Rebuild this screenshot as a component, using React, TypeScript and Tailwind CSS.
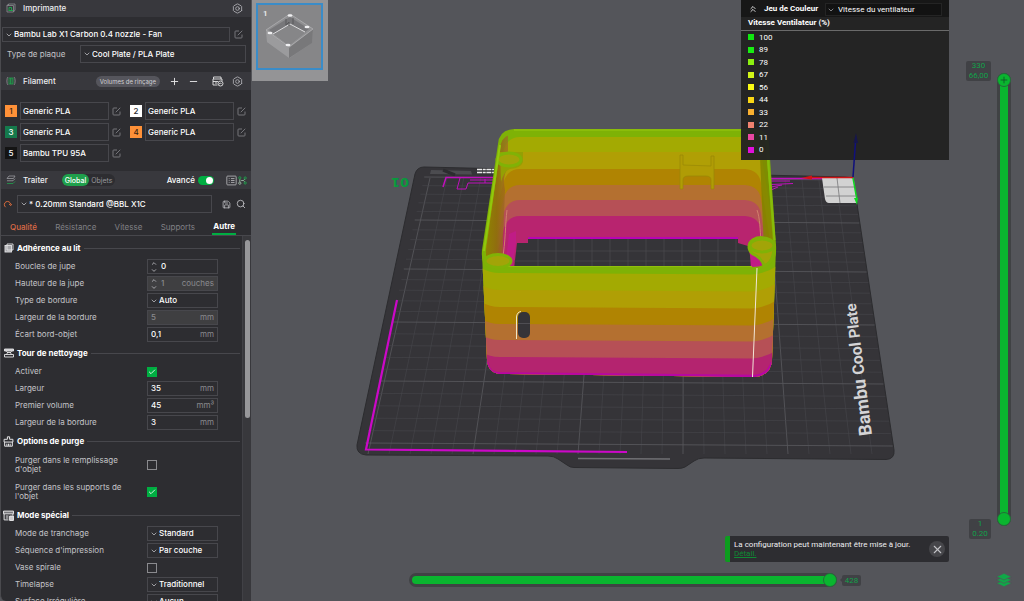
import { useState } from "react"
import type { ReactNode } from "react"
import { Bolt, Check, ChevronDown, ChevronsUp, ChevronUp, Minus, Plus, Save, Search, X } from "lucide-react"

const filaments = [
  { id: 1, name: "Generic PLA", badge: "bg-[#ff9138] text-[#3a2410]" },
  { id: 2, name: "Generic PLA", badge: "bg-white text-[#2d2d31]" },
  { id: 3, name: "Generic PLA", badge: "bg-[#157a4c] text-white" },
  { id: 4, name: "Generic PLA", badge: "bg-[#ff9138] text-[#3a2410]" },
  { id: 5, name: "Bambu TPU 95A", badge: "bg-[#141414] text-white" },
]

const tabs = ["Qualité", "Résistance", "Vitesse", "Supports", "Autre"]

const legend = [
  { value: 100, color: "bg-[#10e810]" },
  { value: 89, color: "bg-[#18ee12]" },
  { value: 78, color: "bg-[#8cf010]" },
  { value: 67, color: "bg-[#d2f418]" },
  { value: 56, color: "bg-[#fafa14]" },
  { value: 44, color: "bg-[#fad614]" },
  { value: 33, color: "bg-[#fab030]" },
  { value: 22, color: "bg-[#f08270]" },
  { value: 11, color: "bg-[#ea48a2]" },
  { value: 0, color: "bg-[#e010dc]" },
]

/* ---------- icons ---------- */

function EditIcon() {
  return (
    <svg viewBox="0 0 18 18" className="size-[9px] shrink-0" fill="none" stroke="#8e8e93" strokeWidth="1.5">
      <path d="M10 2H3.5A1.5 1.5 0 0 0 2 3.5v11A1.5 1.5 0 0 0 3.5 16h11a1.5 1.5 0 0 0 1.5-1.5V9" />
      <path d="M7.5 10.5 16.5 1.5" />
    </svg>
  )
}

function PrinterIcon() {
  return (
    <svg viewBox="0 0 20 20" className="size-[10px]" fill="none" stroke="#8d8d92" strokeWidth="1.6">
      <path d="M5 2h13v12l-3 4H2V5z M5 2v3 M15 5v13 M2 5h13" />
      <path d="M5 15h9M6 15V9h5v5" stroke="#1fa04c" strokeWidth="2" />
    </svg>
  )
}

function FilamentIcon() {
  return (
    <svg viewBox="0 0 20 20" className="size-[10px]" fill="none" strokeWidth="1.7">
      <path d="M4 2C1 4 1 16 4 18M16 2c3 2 3 14 0 16" stroke="#8d8d92" />
      <path d="M6 4h8v12H6zM9 4v12M12 4v12" stroke="#1fa04c" />
    </svg>
  )
}

function ProcessIcon() {
  return (
    <svg viewBox="0 0 20 20" className="size-[10px]" fill="none" strokeWidth="1.6">
      <path d="M6 2h12l-3 5H2z" stroke="#9a9a9f" />
      <path d="M2 11.5h12l4-4" stroke="#9a9a9f" />
      <path d="M2 17h12l4-4" stroke="#1fa04c" />
    </svg>
  )
}

function AmsIcon() {
  return (
    <svg viewBox="0 0 24 22" className="h-[11px] w-[12px]" fill="none" stroke="#e6e6e8" strokeWidth="1.8">
      <path d="M3 6V2h15v4M2 6h18v4M2 6v12h9M2 11h10M6 14h4" />
      <circle cx="17" cy="15" r="5" />
      <path d="m14 16 3-2 2 2" />
    </svg>
  )
}

function ListIcon() {
  return (
    <svg viewBox="0 0 20 20" className="size-[11px]" fill="none" stroke="#b8b8bc" strokeWidth="1.5">
      <rect x="1.5" y="2" width="17" height="16" rx="1.5" />
      <path d="M5 6.5h1.5M9 6.5h6.5M5 10h1.5M9 10h6.5M5 13.5h1.5M9 13.5h6.5" />
    </svg>
  )
}

function CompareIcon() {
  return (
    <svg viewBox="0 0 20 20" className="size-[9px]" fill="none" stroke="#9fb8a6" strokeWidth="2">
      <path d="M4 7v6M7 10h5M12 10l3-3M12 10l3 3" />
      <circle cx="4" cy="4" r="2.5" stroke="#1fa04c" />
      <circle cx="16" cy="4.5" r="2.5" stroke="#1fa04c" />
      <circle cx="4" cy="16" r="2.5" />
      <circle cx="16" cy="15.5" r="2.5" stroke="#1fa04c" />
    </svg>
  )
}

function ResetIcon() {
  return (
    <svg viewBox="0 0 20 20" className="size-[9px] shrink-0" fill="none" stroke="#e8703c" strokeWidth="2">
      <path d="M6 16A7 7 0 1 1 17 10" />
      <path d="m13.5 9 3.5 3.5L20 9" />
    </svg>
  )
}

function BedIcon() {
  return (
    <svg viewBox="0 0 20 20" className="size-[10px]" fill="none" stroke="#e6e6e8" strokeWidth="1.8">
      <path d="M6 5V2h12v12h-3" />
      <rect x="2" y="5" width="13" height="13" fill="#a9a9ad" />
      <path d="M6 5v9h9" />
    </svg>
  )
}

function TowerIcon() {
  return (
    <svg viewBox="0 0 20 20" className="size-[10px]" fill="none" stroke="#e6e6e8" strokeWidth="1.8">
      <path d="M1 2h18v4H1z" fill="#c9c9cc" />
      <path d="M4 6c4 2 4 5 0 7M16 6c-4 2-4 5 0 7M6 9h8" />
      <path d="M1 13h18v5H1z" />
    </svg>
  )
}

function PurgeIcon() {
  return (
    <svg viewBox="0 0 20 20" className="size-[11px]" fill="none" stroke="#e6e6e8" strokeWidth="1.8">
      <path d="M8 6V1.5h4V6h6v5H2V6zM3 11v7.5h14V11M7 18v-4M10 18v-4M13 18v-4" />
    </svg>
  )
}

function SpecialIcon() {
  return (
    <svg viewBox="0 0 20 20" className="size-[11px]" fill="none" stroke="#e6e6e8" strokeWidth="1.8">
      <path d="M1 2h18v5H1z" fill="#77777b" />
      <path d="M2 7v11h8M5 11h5M5 14.5h5M18 7v3" />
      <path d="M12 11h7v8h-7z" fill="#c9c9cc" />
    </svg>
  )
}

/* ---------- form parts ---------- */

function PanelHeader({ icon, title, children }: { icon: ReactNode; title: string; children?: ReactNode }) {
  return (
    <div className="flex h-[18px] shrink-0 items-center bg-[#38383d] pl-[5px] pr-2">
      {icon}
      <h2 className="ml-[7px] font-medium text-[#ededf0]">{title}</h2>
      {children}
    </div>
  )
}

function Dropdown({ value, label, className = "" }: { value: string; label?: string; className?: string }) {
  return (
    <span className={"relative flex items-center border border-[#47474c] " + className}>
      <ChevronDown className="pointer-events-none absolute left-[2px] size-2 text-[#b4b4b8]" strokeWidth={2.5} />
      <select aria-label={label} className="h-full w-full appearance-none bg-transparent pl-[11px] font-medium text-white outline-none">
        <option>{value}</option>
      </select>
    </span>
  )
}

function Section({ icon, title, children }: { icon: ReactNode; title: string; children: ReactNode }) {
  return (
    <section>
      <div className="flex h-5 items-center gap-[3px] pl-[2px]">
        <span className="flex w-[11px] justify-center">{icon}</span>
        <h3 className="font-bold text-white">{title}</h3>
        <span className="h-px flex-1 bg-[#47474c]" />
      </div>
      {children}
    </section>
  )
}

function Row({ label, tall, children }: { label: string; tall?: boolean; children: ReactNode }) {
  return (
    <label className={"flex items-center pl-[14px] " + (tall ? "h-[27px]" : "h-[17px]")}>
      <span className="w-[132px] pr-4 text-[#c4c4c8]">{label}</span>
      {children}
    </label>
  )
}

function Field({ value, unit, spin, disabled }: { value: string; unit?: string; spin?: boolean; disabled?: boolean }) {
  return (
    <span className={"flex h-[15px] w-[71px] items-center border border-[#47474c] px-[3px] " + (disabled ? "bg-[#3f3f41]" : "")}>
      {spin && (
        <span className="-ml-px mr-[3px] flex flex-col text-[#b4b4b8]">
          <ChevronUp className="h-[7px] w-2" strokeWidth={3} />
          <ChevronDown className="h-[7px] w-2" strokeWidth={3} />
        </span>
      )}
      <input
        defaultValue={value}
        disabled={disabled}
        className="w-0 flex-1 bg-transparent font-medium text-white outline-none disabled:text-[#8a8a8e]"
      />
      {unit && <span className="text-[#8a8a8e]">{unit}</span>}
    </span>
  )
}

function Tick({ on }: { on?: boolean }) {
  return (
    <span className="relative flex size-[10px]">
      <input
        type="checkbox"
        defaultChecked={on}
        className="peer size-[10px] appearance-none border border-[#8a8a8e] checked:border-[#00ae42] checked:bg-[#00ae42]"
      />
      <Check className="pointer-events-none absolute inset-px hidden size-2 text-white peer-checked:block" strokeWidth={2.5} />
    </span>
  )
}

function Choice({ value }: { value: string }) {
  return <Dropdown value={value} className="h-[15px] w-[71px]" />
}

/* ---------- 3D scene ---------- */

const majorRows = [177, 220, 269, 322, 381, 443]

function gridRows() {
  const rows: { y: number; major: boolean }[] = []
  for (let i = 0; i < majorRows.length - 1; i++) {
    const step = (majorRows[i + 1] - majorRows[i]) / 5
    for (let k = 0; k < 5; k++) rows.push({ y: majorRows[i] + step * k, major: k === 0 })
  }
  rows.push({ y: 443, major: true })
  return rows
}

const leftAt = (y: number) => 430 - (y - 178) * 0.222
const rightAt = (y: number) => 853 + (y - 178) * 0.15

const innerBands = [
  { y: 137, color: "#a3aa02" },
  { y: 152, color: "#b09f05" },
  { y: 169, color: "#b08402" },
  { y: 185, color: "#b47030" },
  { y: 200, color: "#b65056" },
  { y: 216, color: "#b8246f" },
]

const outerBands = [
  { y: 273, color: "#a3aa02" },
  { y: 290, color: "#b09f05" },
  { y: 307, color: "#b08402" },
  { y: 324, color: "#b47030" },
  { y: 340, color: "#b65056" },
  { y: 357, color: "#b4246f" },
]

function Scene() {
  return (
    <svg viewBox="251 0 773 601" className="h-full w-full" role="img" aria-label="Aperçu">
      <defs>
        <clipPath id="inner">
          <path d="M500 150Q500 135 514 134H757Q765 134 766 146L773 242Q774 268 752 269H500Q485 268 486 250Z" />
        </clipPath>
        <clipPath id="outer">
          <path d="M482 254Q484 267 500 267H752Q774 267 776 248L772 360Q771 376 754 377L500 374Q488 373 487 360Z" />
        </clipPath>
        <linearGradient id="leftWall" x1="0" x2="1">
          <stop offset="0" stopColor="#8c8c00" />
          <stop offset="0.6" stopColor="#8f6e0c" stopOpacity="0.95" />
          <stop offset="1" stopColor="#a0602a" stopOpacity="0.6" />
        </linearGradient>
      </defs>

      {/* build plate */}
      <path
        d="M415 174Q417 167 424 167L845 177Q853 177 854 184L894 450Q895 459 886 459.5L704 458Q698 458 694 461L685 467Q682 468.5 678 468.5L574 467.5Q570 467.5 567 465L558 459Q554 456 548 456L366 455Q356 454 357 445Z"
        fill="#353438"
        stroke="#2c2c2f"
      />
      <path d="M578 458.5 670 459" stroke="#707074" strokeWidth="1.5" />
      <path d="M431 170 471 171 472 174.5 430 174Z" fill="#4c4c50" />
      <path d="M443 170 455 175" stroke="#2c2c2f" strokeWidth="3" />
      <path d="M477 169.5h17M477 172.5h17" stroke="#e8e8e8" strokeWidth="1.5" strokeDasharray="5 .7 3 .7" />
      <g fill="none">
        {Array.from({ length: 25 }, (_, i) => (
          <path
            key={i}
            d={`M${430 + i * 16.9} 178L${368 + i * 21} 454`}
            stroke={i % 5 === 0 ? "#56565a" : "#47474b"}
            strokeWidth={i % 5 === 0 ? 0.9 : 0.6}
          />
        ))}
        {gridRows().map(({ y, major }) => (
          <path
            key={y}
            d={`M${leftAt(y) - 6} ${y}L${rightAt(y)} ${y + 3}`}
            stroke={major ? "#56565a" : "#47474b"}
            strokeWidth={major ? 0.9 : 0.6}
          />
        ))}
      </g>
      <text x="409" y="178" transform="rotate(180 409 178)" fill="#079a3c" className="font-['DejaVu_Sans'] text-[13px] font-bold">
        01
      </text>
      <text transform="translate(872 435) rotate(-97)" fill="#d4d4d6" className="font-['Roboto',sans-serif] font-bold">
        <tspan className="text-[18px]">Bambu </tspan>
        <tspan className="text-[16px]">Cool </tspan>
        <tspan className="text-[15px]">Plate</tspan>
      </text>

      {/* prime line and purge moves */}
      <path d="M397 300 366 449.5 627 452" fill="none" stroke="#cc08c8" strokeWidth="2.2" />
      <g fill="none" stroke="#c010bc">
        <path d="M443 187 446 177.5H497" strokeWidth="1.5" />
        <path d="M460 178 457 189H466L468 183H494M470 180H494M485 179v4" />
        <path d="M768 178.5H824" strokeWidth="1.5" />
        <path d="M771 181H790M771 184.5 793 183.5M771 187 782 185M771 190 778 187" />
      </g>

      {/* axis corner */}
      <path d="M822 178H851Q854 178 854 181L857 203H829Q826 203 825 199Z" fill="#d2d2d2" />
      <path d="M837 178 840 203M824 187 855 187M826 196 857 196" stroke="#77777a" strokeWidth="0.8" />
      <path d="M812 177.5H853" stroke="#d01414" strokeWidth="1.5" />
      <path d="M801 178 812 175.5V179.5Z" fill="#d01414" />
      <path d="M853 178 857 200" stroke="#10d820" strokeWidth="1.5" />
      <path d="M854 198 858 198 857 205Z" fill="#10d820" />

      {/* printed box, inside */}
      <path
        d="M498 144Q499 130 514 129H753Q768 129 769 144L776 245Q778 272 752 273H500Q480 272 482 250Z"
        fill="#7eb206"
      />
      <g clipPath="url(#inner)">
        {innerBands.map((b) => (
          <path
            key={b.y}
            d={`M476 ${b.y + 110}L503 ${b.y + 16}Q506 ${b.y} 520 ${b.y}H745Q759 ${b.y + 1} 761 ${b.y + 14}L776 ${b.y + 110}V290H476Z`}
            fill={b.color}
          />
        ))}
        <path d="M496 134H508V168Q502 176 505 190L502 270H480V250Z" fill="url(#leftWall)" />
        <path d="M759 134H770L775 250H764Z" fill="#7e8200" opacity="0.8" />
        <path d="M507 210C505 225 506 240 502 262M757 210C760 218 760 230 761 240" fill="none" stroke="#d0806c" />
        <path d="M514 269 517 243H528V237.5H738V243L748 246 753 269Z" fill="#353438" />
        <path d="M528 238H738" fill="none" stroke="#b804b4" strokeWidth="2" />
        <path
          d="M538 239v28M556 239v28M574 239v28M592 239v28M610 239v28M628 239v28M646 239v28M664 239v28M682 239v28M700 239v28M718 239v28M736 239v28M516 251h234M514 261h238"
          stroke="#4d4d51"
          strokeWidth="0.6"
        />
        <path d="M509 234 516 231V243L512 269H505Z" fill="#c01c86" />
        <path d="M749 240h12l6 29H751Z" fill="#c01c86" />
      </g>
      <path
        d="M680 155h3v10l28 1v-10h3v33h-3v-9q0-4-5-4h-18q-5 0-5 4v9h-3z"
        fill="#b09c05"
        stroke="#988806"
        strokeWidth="0.7"
      />
      <path d="M514 130H753" stroke="#90c00c" strokeWidth="1.5" />

      {/* printed box, front */}
      <g clipPath="url(#outer)">
        <path d="M478 240H780V380H478Z" fill="#7eb206" />
        {outerBands.map((b) => (
          <path
            key={b.y}
            d={`M478 ${b.y - 8}Q486 ${b.y} 500 ${b.y}L752 ${b.y + 1.5}Q769 ${b.y} 779 ${b.y - 9}V380H478Z`}
            fill={b.color}
          />
        ))}
        <path d="M487 362Q488 373 500 373.5L752 376Q768 376 772 362" fill="none" stroke="#b806a4" strokeWidth="2.5" />
      </g>
      <path d="M500 266.5H752" stroke="#90c00c" />
      <path d="M757 268 752.5 377" stroke="#f2e6d8" />
      <path d="M516.5 339V317Q517 312 521 311.5" fill="none" stroke="#efe6c8" />
      <rect x="518" y="312" width="12" height="26" rx="5" fill="#353438" />
      <path d="M518 323.5h12" stroke="#5a5a5e" strokeWidth="0.7" />

      {/* corner posts */}
      <path d="M500 152H523V162Q521 168 510 169Q504 171 501 182Z" fill="#94a004" />
      <g stroke="#80b206" strokeWidth="3" fill="#a2a408">
        <ellipse cx="509" cy="159.5" rx="12" ry="6.5" />
        <ellipse cx="498" cy="261" rx="13" ry="6.5" />
        <path d="M749 247C749 234 775 235 774 247Q774 262 764 266Q762 258 753 254Q749 251 749 247Z" />
        <ellipse cx="762" cy="245.5" rx="12" ry="6.5" />
      </g>
      <path d="M500 145 484 251" stroke="#92c80c" strokeWidth="2" />
      <path d="M768 160 774.5 240" stroke="#88bc0a" strokeWidth="2" />
    </svg>
  )
}

/* the Z axis is drawn over the legend panel */
function ZAxis() {
  return (
    <svg viewBox="251 0 773 601" className="pointer-events-none absolute inset-0 h-full w-full" aria-hidden="true">
      <path d="M853 177 855.5 142" stroke="#10107c" strokeWidth="1.5" />
      <path d="M853.5 143 856 133 858 143Z" fill="#16164c" />
    </svg>
  )
}

function Thumbnail() {
  return (
    <button aria-label="Plateau 1" className="absolute left-px top-0 h-[81px] w-[76px] bg-[#949496] px-1 pb-[11px] pt-[3px]">
      <span className="relative block h-full w-[67px] border-2 border-[#3a8cc8] bg-[#868688]">
        <span className="absolute left-[5px] top-[3px] font-semibold leading-3 text-[#ececee]">1</span>
        <svg viewBox="0 0 63 63" className="h-full w-full">
          <path d="M8 25 32 9 55 24 54 38 32 53 9 37Z" fill="#8f8f91" />
          <path d="M8 25 31 43V53L9 37Z" fill="#9b9b9d" />
          <path d="M55 24 31 43V53L54 38Z" fill="#78787a" />
          <path d="M11 25 32 12 51 24 31 40Z" fill="#77777a" />
          <path d="m16 29 16-10 16 8-17 13Z" fill="#868688" />
          <path d="m15 29 17-10 15 8" fill="none" stroke="#dcdcde" />
          <path d="M8 25 32 9 55 24 31 42Z" fill="none" stroke="#b0b0b2" strokeWidth="0.8" />
          <path d="M28 14v6l3-3v4M35 13v6" fill="none" stroke="#58585a" />
          <g fill="#f0f0f2">
            <ellipse cx="32" cy="10.5" rx="2.5" ry="1.2" />
            <ellipse cx="12" cy="28" rx="2.5" ry="1.2" />
            <ellipse cx="49" cy="22" rx="2.5" ry="1.2" />
            <ellipse cx="30" cy="40" rx="2.5" ry="1.2" />
          </g>
        </svg>
      </span>
    </button>
  )
}

function Legend() {
  return (
    <div className="absolute right-[75px] top-0 flex h-40 w-[208px] flex-col bg-[#222222]/95 text-white">
      <div className="flex h-[17px] items-center bg-[#171717] px-[7px]">
        <button aria-label="Réduire">
          <ChevronsUp className="size-[10px]" strokeWidth={2} />
        </button>
        <h2 className="ml-[6px] flex-1 font-bold">Jeu de Couleur</h2>
        <span className="relative mt-[2px] flex h-[13px] w-[117px] items-center border border-[#242424] bg-[#121212]">
          <ChevronDown className="pointer-events-none absolute left-px size-2 text-[#b4b4b8]" />
          <select aria-label="Jeu de Couleur" className="w-full appearance-none pl-3 outline-none">
            <option>Vitesse du ventilateur</option>
          </select>
        </span>
      </div>
      <h3 className="h-[14px] border-b border-[#6a6a6a] pl-[7px] font-bold leading-3">Vitesse Ventilateur (%)</h3>
      <ul className="flex flex-1 flex-col pb-1 pl-[7px]">
        {legend.map((l) => (
          <li key={l.value} className="flex flex-1 items-center gap-[5px]">
            <span className={"size-[6px] " + l.color} />
            {l.value}
          </li>
        ))}
      </ul>
    </div>
  )
}

function LayerSlider() {
  const thumb =
    "pointer-events-none absolute inset-0 h-full w-full appearance-none bg-transparent [direction:rtl] [writing-mode:vertical-lr] [&::-webkit-slider-thumb]:pointer-events-auto [&::-webkit-slider-thumb]:size-[14px] [&::-webkit-slider-thumb]:appearance-none [&::-webkit-slider-thumb]:rounded-full [&::-webkit-slider-thumb]:border [&::-webkit-slider-thumb]:border-[#256b3a] [&::-webkit-slider-thumb]:bg-[#0ab52f]"
  return (
    <div className="absolute bottom-[75px] right-[13px] top-[73px] w-[14px]">
      <div className="h-full rounded-full bg-[#404244] px-[3px] py-1">
        <div className="h-full bg-[#0ab52f]" />
      </div>
      <input type="range" min={1} max={330} defaultValue={1} aria-label="Couche basse" className={thumb} />
      <input type="range" min={1} max={330} defaultValue={330} aria-label="Couche haute" className={thumb} />
      <Plus className="pointer-events-none absolute left-[2px] top-[2px] size-[10px] text-[#14562a]" strokeWidth={2} />
      <p className="absolute right-5 top-[-12px] w-[25px] rounded-xs bg-[#404145] text-center leading-[10px] text-[#12a04a]">
        330
        <br />
        66,00
      </p>
      <p className="absolute bottom-[-13px] right-5 w-[22px] rounded-xs bg-[#404145] text-center leading-[10px] text-[#12a04a]">
        1
        <br />
        0.20
      </p>
    </div>
  )
}

function MoveSlider() {
  return (
    <div className="absolute bottom-[14px] left-[158px] right-[163px] flex items-center">
      <div className="relative h-[14px] flex-1">
        <div className="h-full rounded-full bg-[#404244] p-[3px]">
          <div className="h-full rounded-full bg-[#0ab52f]" />
        </div>
        <input
          type="range"
          min={0}
          max={428}
          defaultValue={428}
          aria-label="Mouvement"
          className="absolute inset-0 h-full w-full appearance-none bg-transparent [&::-webkit-slider-thumb]:size-[14px] [&::-webkit-slider-thumb]:appearance-none [&::-webkit-slider-thumb]:rounded-full [&::-webkit-slider-thumb]:border [&::-webkit-slider-thumb]:border-[#256b3a] [&::-webkit-slider-thumb]:bg-[#0ab52f]"
        />
      </div>
      <span className="ml-[3px] size-0 border-y-2 border-r-2 border-y-transparent border-r-[#404145]" />
      <span className="w-[19px] rounded-xs bg-[#404145] text-center leading-[11px] text-[#12a04a]">428</span>
    </div>
  )
}

function Notice() {
  const [open, setOpen] = useState(true)
  if (!open) return null
  return (
    <div className="absolute bottom-[39px] right-[75px] flex h-[26px] w-[224px] items-center rounded-xs border-l-[5px] border-[#0c9c1e] bg-[#2d2d31] px-1 text-[#ededf0]">
      <div className="flex-1 leading-[9px]">
        <p>La configuration peut maintenant être mise à jour.</p>
        <a href="#detail" className="text-[#0f8a34] underline">
          Détail.
        </a>
      </div>
      <button aria-label="Fermer" onClick={() => setOpen(false)} className="flex size-4 items-center justify-center rounded-full bg-[#46464a]">
        <X className="size-[13px] text-[#c4c4c8]" strokeWidth={2} />
      </button>
    </div>
  )
}

/* ---------- page ---------- */

export default function App() {
  const [tab, setTab] = useState("Autre")

  return (
    <div className="flex h-screen overflow-hidden bg-[#54555a] font-['Inter',sans-serif] text-[8px] leading-[9px]">
      <aside className="flex w-[251px] shrink-0 flex-col overflow-hidden rounded-bl-md border-l border-[#4a4a4e] bg-[#2d2d31]">
        <div className="-mt-px">
          <PanelHeader icon={<PrinterIcon />} title="Imprimante">
            <button aria-label="Réglages imprimante" className="ml-auto">
              <Bolt className="size-[11px] text-[#b4b4b8]" strokeWidth={1.8} />
            </button>
          </PanelHeader>
        </div>

        <div className="mt-[10px] flex items-center gap-1 pl-px pr-2">
          <Dropdown label="Imprimante" value="Bambu Lab X1 Carbon 0.4 nozzle - Fan" className="h-[15px] flex-1" />
          <button aria-label="Modifier">
            <EditIcon />
          </button>
        </div>
        <label className="mt-[3px] flex items-center pl-[6px] pr-[5px]">
          <span className="w-[73px] text-[#c4c4c8]">Type de plaque</span>
          <Dropdown value="Cool Plate / PLA Plate" className="h-[18px] flex-1" />
        </label>

        {/* Filament */}
        <div className="mt-[9px]">
          <PanelHeader icon={<FilamentIcon />} title="Filament">
            <button className="ml-auto rounded-full bg-[#55555c] px-1 py-px text-[6px] text-[#d0d0d4]">Volumes de rinçage</button>
            <button aria-label="Ajouter" className="ml-[9px]">
              <Plus className="size-[11px] text-[#e6e6e8]" strokeWidth={2} />
            </button>
            <button aria-label="Retirer" className="ml-2">
              <Minus className="size-[11px] text-[#e6e6e8]" strokeWidth={2} />
            </button>
            <button aria-label="Synchroniser AMS" className="ml-[13px]">
              <AmsIcon />
            </button>
            <button aria-label="Réglages filament" className="ml-2">
              <Bolt className="size-[11px] text-[#b4b4b8]" strokeWidth={1.8} />
            </button>
          </PanelHeader>
        </div>
        <div className="mt-3 grid grid-cols-2 gap-y-[3px]">
          {filaments.map((f) => (
            <div key={f.id} className="flex items-center gap-[3px] pl-1 pr-[5px]">
              <button className={"size-3 text-center font-medium leading-3 " + f.badge}>{f.id}</button>
              <span className="flex h-[18px] flex-1 border border-[#47474c] px-[2px]">
                <input aria-label={"Filament " + f.id} defaultValue={f.name} className="w-0 flex-1 bg-transparent font-medium text-white outline-none" />
              </span>
              <button aria-label="Modifier">
                <EditIcon />
              </button>
            </div>
          ))}
        </div>

        {/* Process */}
        <div className="mt-[9px]">
          <PanelHeader icon={<ProcessIcon />} title="Traiter">
            <div className="ml-[14px] flex h-3 items-center rounded-full bg-[#2d2d31] text-[7px] text-[#98989c]">
              <button className="h-3 rounded-full bg-[#1fa04c] px-[3px] font-medium text-white">Global</button>
              <button className="px-[2px]">Objets</button>
            </div>
            <label className="ml-auto flex items-center gap-[3px] font-medium text-white">
              Avancé
              <input
                type="checkbox"
                role="switch"
                defaultChecked
                className="h-[9px] w-4 appearance-none rounded-full bg-[#55555c] p-px before:block before:size-[7px] before:rounded-full before:bg-white checked:bg-[#00ae42] checked:before:ml-[7px]"
              />
            </label>
            <button aria-label="Liste" className="ml-3">
              <ListIcon />
            </button>
            <button aria-label="Comparer" className="-mr-1 ml-px">
              <CompareIcon />
            </button>
          </PanelHeader>
        </div>
        <div className="mt-[6px] flex items-center pl-[2px] pr-[5px]">
          <button aria-label="Réinitialiser" className="mr-[5px]">
            <ResetIcon />
          </button>
          <Dropdown label="Profil" value="* 0.20mm Standard @BBL X1C" className="h-[18px] flex-1" />
          <button aria-label="Enregistrer" className="ml-[10px]">
            <Save className="size-[9px] text-[#c4c4c8]" strokeWidth={2} />
          </button>
          <button aria-label="Rechercher" className="ml-[5px]">
            <Search className="size-[10px] text-[#c4c4c8]" strokeWidth={2} />
          </button>
        </div>
        <div className="mt-[6px] flex h-[17px] shrink-0 justify-between border-b border-[#47474c] pl-2 pr-[15px]">
          {tabs.map((t) => (
            <button
              key={t}
              onClick={() => setTab(t)}
              className={
                "px-px " +
                (t === tab
                  ? "border-b-2 border-[#00ae42] font-bold text-white"
                  : t === "Qualité"
                    ? "font-medium text-[#dc6a46]"
                    : "text-[#808085]")
              }
            >
              {t}
            </button>
          ))}
        </div>

        <div className="flex min-h-0 flex-1">
          <div className="min-h-0 flex-1 overflow-hidden pr-[2px] pt-[2px]">
            <Section icon={<BedIcon />} title="Adhérence au lit">
              <Row label="Boucles de jupe"><Field value="0" spin /></Row>
              <Row label="Hauteur de la jupe"><Field value="1" unit="couches" spin disabled /></Row>
              <Row label="Type de bordure"><Choice value="Auto" /></Row>
              <Row label="Largeur de la bordure"><Field value="5" unit="mm" disabled /></Row>
              <Row label="Écart bord-objet"><Field value="0,1" unit="mm" /></Row>
            </Section>
            <Section icon={<TowerIcon />} title="Tour de nettoyage">
              <Row label="Activer"><Tick on /></Row>
              <Row label="Largeur"><Field value="35" unit="mm" /></Row>
              <Row label="Premier volume"><Field value="45" unit="mm³" /></Row>
              <Row label="Largeur de la bordure"><Field value="3" unit="mm" /></Row>
            </Section>
            <Section icon={<PurgeIcon />} title="Options de purge">
              <Row label="Purger dans le remplissage d'objet" tall><Tick /></Row>
              <Row label="Purger dans les supports de l'objet" tall><Tick on /></Row>
            </Section>
            <Section icon={<SpecialIcon />} title="Mode spécial">
              <Row label="Mode de tranchage"><Choice value="Standard" /></Row>
              <Row label="Séquence d'impression"><Choice value="Par couche" /></Row>
              <Row label="Vase spirale"><Tick /></Row>
              <Row label="Timelapse"><Choice value="Traditionnel" /></Row>
              <Row label="Surface Irrégulière"><Choice value="Aucun" /></Row>
            </Section>
          </div>
          <div className="w-[9px] border-l border-[#414146] bg-[#38383c] pl-[2px] pr-px pt-1">
            <div className="h-[178px] rounded-full bg-[#97979a]" />
          </div>
        </div>
      </aside>

      <main className="relative min-w-0 flex-1 font-['Roboto',sans-serif]">
        <Scene />
        <Thumbnail />
        <Legend />
        <ZAxis />
        <LayerSlider />
        <Notice />
        <MoveSlider />
        <button aria-label="Couches" className="absolute bottom-[13px] right-3">
          <svg viewBox="0 0 24 24" className="size-4" fill="#10a848" stroke="#55565a" strokeWidth="1">
            <path d="m12 12 11 5-11 5-11-5z" />
            <path d="m12 7 11 5-11 5-11-5z" />
            <path d="m12 2 11 5-11 5L1 7z" />
          </svg>
        </button>
      </main>
    </div>
  )
}
